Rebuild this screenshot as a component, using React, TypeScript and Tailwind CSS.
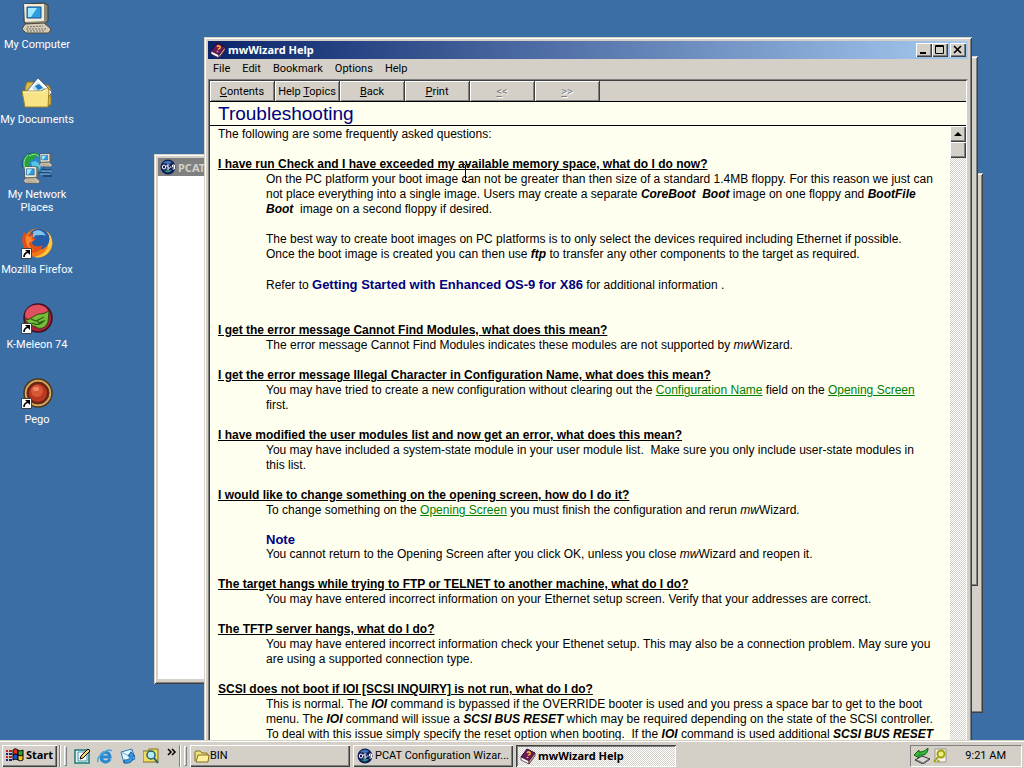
import type { ReactNode } from 'react';

const Book = () => (
    <svg viewBox="0 0 16 16" className="size-4 shrink-0" aria-hidden="true">
        <path d="M1 9 7 1l8 4-6 8z" fill="#6a1a5c" stroke="#240828" />
        <path d="M1 9v3l8 4v-3z" fill="#fff" stroke="#401030" strokeWidth=".7" />
        <path d="m9 13 6-8v3l-6 8z" fill="#d8a890" stroke="#401030" strokeWidth=".7" />
        <path d="M7 5c1-2 4-1 3 1L8 7.500" fill="none" stroke="#ffb428" strokeWidth="1.500" />
        <path d="m7 9 1 1" stroke="#ffb428" strokeWidth="1.500" />
    </svg>
);

const Os9 = () => (
    <svg viewBox="0 0 16 16" className="size-4 shrink-0" aria-hidden="true">
        <circle cx="8" cy="8" r="7.5" fill="#101c58" />
        <path d="M3 4c3-3 7-3 9 0L8 5z" fill="#3f76b8" />
        <path d="M4 12c3 2 6 2 8-1l-4 0z" fill="#2a9080" />
        <ellipse cx="4" cy="8" rx="1.7" ry="2" fill="none" stroke="#fff" />
        <path d="M9.500 6H7v2h2v2H6.500M10 8h1.500M14.500 8h-2V6h2v4h-2" fill="none" stroke="#fff" />
    </svg>
);

const Monitor = () => (
    <>
        <path d="m3 2 20-1 4 2v16l-4 3H6l-3-2z" fill="#8c8878" stroke="#403c34" />
        <path d="M3 2h20v17l-19 1z" fill="#f0ecdc" />
        <path d="M6 5h14v11H6z" fill="#2f9ce0" stroke="#18508c" />
        <path d="M7 6h9l-6 9H7z" fill="#a0e8ff" />
        <path d="m4 22 19-1 7 6-2 4H5l-4-4z" fill="#d4ccb8" stroke="#504838" />
        <path d="m6 25 16-1m-17 3h20m-19 2h18" stroke="#787060" strokeDasharray="2 1" />
    </>
);

const Computer = () => (
    <svg viewBox="0 0 32 32" className="size-8" aria-hidden="true">
        <Monitor />
    </svg>
);

const Documents = () => (
    <svg viewBox="0 0 32 32" className="size-8" aria-hidden="true">
        <path d="M4 10 6 5h6l2 3h13l3 4v16H5z" fill="#d8b848" stroke="#907020" />
        <path d="M6 14 17 1l14 14-8 12z" fill="#fff" stroke="#506c90" />
        <path d="m11 11 6-6 8 8-6 6z" fill="#b8ddf4" />
        <path d="m14 9 4-2 4 4-5 2z" fill="#2878bc" />
        <path d="M1 14h20l2-2h5l-1 18H4z" fill="#f8e484" stroke="#a08428" />
        <path d="M2 15h20l2-2h3" fill="none" stroke="#fff8c8" />
    </svg>
);

const Network = () => (
    <svg viewBox="0 0 32 32" className="size-8" aria-hidden="true">
        <circle cx="12" cy="12" r="11" fill="#2b86c8" stroke="#104c78" />
        <path d="M2 8c3-7 11-8 16-6l-5 5-4 2-1 5-4 2-2 3z" fill="#28a040" />
        <path d="m10 10 5-1 5 5-3 6-5-2z" fill="#58c4e8" />
        <path d="M7 3c-4 4-5 8-3 13M8 4c4-2 7-2 10 0" fill="none" stroke="#90e890" />
        <g transform="translate(18 1) scale(.44)"><Monitor /></g>
        <g transform="translate(2 14) scale(.56)"><Monitor /></g>
        <path d="M20 18h11M19 21h10M22 24h9" stroke="#183c6c" strokeWidth="1.500" />
        <path d="M20 19h11M19 22h10" stroke="#80b8e0" />
    </svg>
);

const Shortcut = () => (
    <>
        <path d="M.5 21.500h10v10H.5z" fill="#fff" stroke="#404040" />
        <path d="M3 30c0-3 1-4 4-5" fill="none" stroke="#000" strokeWidth="1.700" />
        <path d="M4 23h5v5z" fill="#000" />
    </>
);

const Firefox = () => (
    <svg viewBox="0 0 32 32" className="size-8" aria-hidden="true">
        <circle cx="17" cy="16" r="14.500" fill="#f07818" />
        <path d="M20 2c8 2 12 8 11 16-2 9-10 14-18 12 10-2 15-8 14-16-1-5-3-9-7-12z" fill="#fcc840" />
        <circle cx="18" cy="12" r="10.500" fill="#245ca8" />
        <path d="M12 5c5-4 11-1 13 4-4-2-7 0-10-1l-3 3z" fill="#80c4ec" />
        <path d="M3 5c1 2 3 3 5 3l5-2-2 4 4 2-4 3c0 4 5 6 11 3-3 8-11 10-17 5-4-4-5-12-2-18z" fill="#e05018" />
        <path d="m5 8 4 2 3-1-2 3 3 1-5 3c0 4 3 6 6 7-8 0-10-8-9-15z" fill="#f88830" />
        <Shortcut />
    </svg>
);

const KMeleon = () => (
    <svg viewBox="0 0 32 32" className="size-8" aria-hidden="true">
        <circle cx="17" cy="16" r="14" fill="#a8203c" stroke="#40101c" strokeWidth="1.500" />
        <path d="M4 14c0-8 7-12 15-11 4 1 7 3 8 6L7 17z" fill="#e05060" />
        <path d="M4 18c6 0 9-5 14-6 5 0 6-1 10-3l-1 11c-2 6-8 8-12 5-4-1-7-3-11-7z" fill="#78bc38" stroke="#284c10" />
        <path d="m10 17 5 2 8-4M11 21c5 3 10 1 13-3m-8 0 2 3 4-2" fill="none" stroke="#286018" strokeWidth="1.200" />
        <Shortcut />
    </svg>
);

const Pego = () => (
    <svg viewBox="0 0 32 32" className="size-8" aria-hidden="true">
        <circle cx="17" cy="16" r="14" fill="#d8a860" stroke="#50381c" strokeWidth="1.500" />
        <circle cx="17" cy="16" r="11" fill="#702014" stroke="#603018" />
        <circle cx="17" cy="16" r="9" fill="#b83820" />
        <circle cx="16" cy="14" r="6" fill="#d85838" />
        <ellipse cx="15" cy="12" rx="3" ry="2" fill="#f08868" />
        <Shortcut />
    </svg>
);

const desktopIcons = [
    { label: 'My Computer', icon: <Computer /> },
    { label: 'My Documents', icon: <Documents /> },
    { label: 'My Network Places', icon: <Network /> },
    { label: 'Mozilla Firefox', icon: <Firefox /> },
    { label: 'K-Meleon 74', icon: <KMeleon /> },
    { label: 'Pego', icon: <Pego /> },
];

const raised = 'bg-[#d4d0c8] shadow-[inset_1px_1px_#fff,inset_-1px_-1px_#404040,inset_-2px_-2px_#808080]';
const frame = 'bg-[#d4d0c8] shadow-[inset_1px_1px_#d4d0c8,inset_-1px_-1px_#404040,inset_2px_2px_#fff,inset_-2px_-2px_#808080]';
const dither = 'bg-[repeating-conic-gradient(#d4d0c8_0_25%,#ffffff_0_50%)] bg-[length:2px_2px]';
const boldUi = "font-['Noto_Sans',sans-serif] font-bold";

const CaptionButton = ({ label, children }: { label: string; children: ReactNode }) => (
    <button aria-label={label} className={`h-3.5 w-4 ${raised}`}>
        <svg viewBox="0 0 16 14" className="h-3.5 w-4" fill="none" stroke="#000" aria-hidden="true">
            {children}
        </svg>
    </button>
);

const Line = ({ children }: { children: ReactNode }) => (
    <span className="block whitespace-nowrap">{children}</span>
);

const Topic = ({ title, children }: { title: string; children: ReactNode }) => (
    <section className="mb-[15px]">
        <h2 className="font-bold whitespace-nowrap underline">{title}</h2>
        <div className="ml-12">{children}</div>
    </section>
);

const Jump = ({ children }: { children: ReactNode }) => (
    <a href="#" className="text-[#008000] underline">{children}</a>
);

const Cmd = ({ children }: { children: ReactNode }) => (
    <b className="italic">{children}</b>
);

const HelpText = () => (
    <div className="min-w-0 flex-1 overflow-hidden pt-px pl-2 text-[12px] leading-[15px] text-black">
        <p className="mb-[15px]">The following are some frequently asked questions:</p>
        <Topic title="I have run Check and I have exceeded my available memory space, what do I do now?">
            <p className="mb-[15px]">
                <Line>On the PC platform your boot image can not be greater than then size of a standard 1.4MB floppy. For this reason we just can</Line>
                <Line>not place everything into a single image. Users may create a separate <Cmd>CoreBoot&nbsp; Boot</Cmd> image on one floppy and <Cmd>BootFile</Cmd></Line>
                <Line><Cmd>Boot</Cmd>&nbsp; image on a second floppy if desired.</Line>
            </p>
            <p className="mb-[15px]">
                <Line>The best way to create boot images on PC platforms is to only select the devices required including Ethernet if possible.</Line>
                <Line>Once the boot image is created you can then use <Cmd>ftp</Cmd> to transfer any other components to the target as required.</Line>
            </p>
            <p className="mb-[30px] leading-4 whitespace-nowrap">
                Refer to <b className="text-[13px] text-[#000080]">Getting Started with Enhanced OS-9 for X86</b> for additional information .
            </p>
        </Topic>
        <Topic title="I get the error message Cannot Find Modules, what does this mean?">
            <Line>The error message Cannot Find Modules indicates these modules are not supported by <i>mw</i>Wizard.</Line>
        </Topic>
        <Topic title="I get the error message Illegal Character in Configuration Name, what does this mean?">
            <Line>You may have tried to create a new configuration without clearing out the <Jump>Configuration Name</Jump> field on the <Jump>Opening Screen</Jump></Line>
            <Line>first.</Line>
        </Topic>
        <Topic title="I have modified the user modules list and now get an error, what does this mean?">
            <Line>You may have included a system-state module in your user module list.&nbsp; Make sure you only include user-state modules in</Line>
            <Line>this list.</Line>
        </Topic>
        <Topic title="I would like to change something on the opening screen, how do I do it?">
            <Line>To change something on the <Jump>Opening Screen</Jump> you must finish the configuration and rerun <i>mw</i>Wizard.</Line>
            <h3 className="mt-[15px] text-[13px] leading-[14px] font-bold text-[#000080]">Note</h3>
            <Line>You cannot return to the Opening Screen after you click OK, unless you close <i>mw</i>Wizard and reopen it.</Line>
        </Topic>
        <Topic title="The target hangs while trying to FTP or TELNET to another machine, what do I do?">
            <Line>You may have entered incorrect information on your Ethernet setup screen. Verify that your addresses are correct.</Line>
        </Topic>
        <Topic title="The TFTP server hangs, what do I do?">
            <Line>You may have entered incorrect information check your Ethenet setup. This may also be a connection problem. May sure you</Line>
            <Line>are using a supported connection type.</Line>
        </Topic>
        <Topic title="SCSI does not boot if IOI [SCSI INQUIRY] is not run, what do I do?">
            <Line>This is normal. The <Cmd>IOI</Cmd> command is bypassed if the OVERRIDE booter is used and you press a space bar to get to the boot</Line>
            <Line>menu. The <Cmd>IOI</Cmd> command will issue a <Cmd>SCSI BUS RESET</Cmd> which may be required depending on the state of the SCSI controller.</Line>
            <Line>To deal with this issue simply specify the reset option when booting.&nbsp; If the <Cmd>IOI</Cmd> command is used additional <Cmd>SCSI BUS RESET</Cmd></Line>
        </Topic>
    </div>
);

const toolButtons = [
    { key: 'C', rest: 'ontents' },
    { before: 'Help ', key: 'T', rest: 'opics' },
    { key: 'B', rest: 'ack' },
    { key: 'P', rest: 'rint' },
    { key: '<', rest: '<', off: true },
    { key: '>', rest: '>', off: true },
];

const HelpWindow = () => (
    <div className={`absolute top-[37px] left-[204px] flex h-[740px] w-[768px] flex-col p-1 ${frame}`}>
        <div className="flex h-[18px] shrink-0 items-center bg-linear-to-r/srgb from-[#0a246a] to-[#a6caf0] px-0.5 text-white">
            <Book />
            <span className={`ml-0.5 flex-1 pb-0.5 ${boldUi}`}>mwWizard Help</span>
            <CaptionButton label="Minimize"><path d="M4 10h6" strokeWidth="2" /></CaptionButton>
            <CaptionButton label="Maximize"><path d="M3.500 2.500h8v8h-8zM3 3.500h9" /></CaptionButton>
            <span className="w-0.5" />
            <CaptionButton label="Close"><path d="m4 3 7 7m0-7-7 7" strokeWidth="1.700" /></CaptionButton>
        </div>
        <div className="flex h-5 shrink-0 items-center gap-3 px-[5px] pb-0.5">
            {['File', 'Edit', 'Bookmark', 'Options', 'Help'].map((name) => (
                <button key={name}>{name}</button>
            ))}
        </div>
        <div className="flex min-h-0 flex-1 flex-col border border-[#808080] border-r-[#d4d0c8]">
            <div className="flex min-h-0 flex-1 flex-col border-x border-t border-[#404040] border-r-white">
                <div className="flex h-[21px] shrink-0 border-b border-black">
                    {toolButtons.map((b) => (
                        <button
                            key={b.key}
                            disabled={b.off}
                            className="w-[65px] border-r border-[#404040] bg-[#d4d0c8] whitespace-nowrap shadow-[inset_1px_1px_#fff,inset_-1px_-1px_#808080] disabled:text-[#808080] disabled:text-shadow-[1px_1px_#fff]"
                        >
                            {b.before}<u>{b.key}</u>{b.rest}
                        </button>
                    ))}
                </div>
                <div className="flex min-h-0 flex-1 flex-col bg-[#fffff0] font-['Liberation_Sans',sans-serif]">
                    <h1 className="h-6 shrink-0 border-b border-black pl-2 text-[19px] leading-[23px] text-[#000080]">Troubleshooting</h1>
                    <div className="flex min-h-0 flex-1">
                        <HelpText />
                        <div className={`w-4 shrink-0 ${dither}`}>
                            <button aria-label="Scroll up" className={`block h-4 w-4 ${raised}`}>
                                <svg viewBox="0 0 16 16" className="size-4" aria-hidden="true"><path d="m4 10 4-4 4 4z" /></svg>
                            </button>
                            <div className={`h-4 w-4 ${raised}`} />
                        </div>
                    </div>
                </div>
            </div>
        </div>
    </div>
);

const Start = () => (
    <svg viewBox="0 0 18 16" className="h-4 w-[18px]" aria-hidden="true">
        <path d="M7 3c2-2 3-1 5 0v5C10 7 9 7 7 8z" fill="#e03020" stroke="#000" />
        <path d="M12 3c2 1 3 1 5 0v5c-2 1-3 1-5 0z" fill="#30a030" stroke="#000" />
        <path d="M7 8c2-1 3-1 5 0v5c-2-1-3-1-5 0z" fill="#2050d0" stroke="#000" />
        <path d="M12 8c2 1 3 1 5 0v5c-2 1-3 1-5 0z" fill="#f0c820" stroke="#000" />
        <path d="M0 4h2m1 0h3M0 10h2m1 0h3" stroke="#c02020" strokeWidth="2" />
        <path d="M0 7h2m1 0h3M0 13h2m1 0h3" stroke="#202080" strokeWidth="2" />
    </svg>
);

const quickLaunch = [
    {
        label: 'Show Desktop',
        art: (
            <>
                <path d="M1 2h14v13H1z" fill="#e8f4f4" stroke="#187878" strokeWidth="1.500" />
                <path d="M4 4h9v9H4z" fill="#fff" stroke="#4098a0" />
                <path d="m6 11 1-3 7-7 2 2-7 7z" fill="#f8d878" stroke="#000" />
            </>
        ),
    },
    {
        label: 'Internet Explorer',
        art: (
            <>
                <path d="M13 11c-3 5-9 3-9-2s8-7 9 0H5" fill="none" stroke="#2888d0" strokeWidth="3" />
                <path d="M1 14C-1 9 11-1 15 3" fill="none" stroke="#48a8e0" strokeWidth="1.500" />
            </>
        ),
    },
    {
        label: 'Outlook Express',
        art: (
            <>
                <path d="m1 4 11-3 3 10-11 4z" fill="#e8f8ff" stroke="#2878b8" />
                <path d="m1 4 8 4 3-7" fill="none" stroke="#60a8d8" />
                <path d="M4 15c7 1 10-3 9-7h2l-4-4-3 4h2c0 3-2 4-6 4z" fill="#3898e0" stroke="#1860a0" />
            </>
        ),
    },
    {
        label: 'Search',
        art: (
            <>
                <path d="M0 3h5l1-2h9v13H0z" fill="#f0dc60" stroke="#807020" />
                <circle cx="8" cy="7" r="4" fill="#b8ecf8" stroke="#206070" strokeWidth="1.500" />
                <path d="m11 10 4 5" stroke="#206070" strokeWidth="2" />
            </>
        ),
    },
];

const Folder = () => (
    <svg viewBox="0 0 16 16" className="size-4 shrink-0" aria-hidden="true">
        <path d="M1 13V4l1-1h4l2 2h5v3" fill="#f0e080" stroke="#807020" />
        <path d="M4 7h11l-1 7H2z" fill="#fff0a0" stroke="#807020" />
    </svg>
);

const Grip = () => (
    <>
        <span className="h-[22px] w-0.5 border-l border-[#808080] bg-white" />
        <span className="mx-[3px] h-5 w-[3px] border border-t-white border-r-[#808080] border-b-[#808080] border-l-white" />
    </>
);

const Taskbar = () => (
    <footer className="flex h-7 shrink-0 items-center border-t border-[#d4d0c8] bg-[#d4d0c8] px-0.5 pt-0.5 shadow-[inset_0_1px_#fff]">
        <button className={`flex h-[22px] w-[55px] items-center justify-center gap-0.5 pb-0.5 ${boldUi} ${raised}`}>
            <Start />Start
        </button>
        <span className="w-0.5" />
        <Grip />
        <div className="flex items-center gap-[7px] px-1">
            {quickLaunch.map((q) => (
                <button key={q.label} aria-label={q.label}>
                    <svg viewBox="0 0 16 16" className="block size-4" aria-hidden="true">{q.art}</svg>
                </button>
            ))}
        </div>
        <button aria-label="More" className="mb-2 w-4">
            <svg viewBox="0 0 16 8" className="h-2 w-4" fill="none" stroke="#000" strokeWidth="1.500" aria-hidden="true">
                <path d="m5 1 3 3-3 3m4-6 3 3-3 3" />
            </svg>
        </button>
        <Grip />
        <div className="flex min-w-0 flex-1 gap-[3px]">
            <button className={`flex h-[22px] w-40 items-center px-1 ${raised}`}><Folder />BIN</button>
            <button className={`flex h-[22px] w-40 items-center gap-0.5 px-1 whitespace-nowrap ${raised}`}><Os9 />PCAT Configuration Wizar...</button>
            <button className={`flex h-[22px] w-40 items-center gap-0.5 px-1 shadow-[inset_1px_1px_#404040,inset_-1px_-1px_#fff,inset_2px_2px_#808080] ${boldUi} ${dither}`}><Book />mwWizard Help</button>
        </div>
        <div className="flex h-[22px] w-28 items-center border border-t-[#808080] border-r-white border-b-white border-l-[#808080] px-[3px]">
            <svg viewBox="0 0 16 16" className="size-4" aria-hidden="true">
                <path d="m1 12 7-4 8 3-7 5z" fill="#d8d8d8" stroke="#303030" />
                <path d="m3 12 6 3 6-4" fill="none" stroke="#707070" />
                <path d="m0 7 5-5v2c4 0 6-1 9-4 0 6-4 8-9 7v3z" fill="#38b838" stroke="#106010" />
            </svg>
            <svg viewBox="0 0 16 16" className="ml-0.5 size-4" aria-hidden="true">
                <path d="M3 1h11v13H3z" fill="#f4f4e8" stroke="#989890" />
                <circle cx="9" cy="6" r="3.500" fill="#f0f080" stroke="#a0a010" strokeWidth="2" />
                <path d="m6 9-4 5m4-2 1 2" stroke="#a0a010" strokeWidth="2" />
            </svg>
            <span className="flex-1 pr-3 text-right">9:21 AM</span>
        </div>
    </footer>
);

export default function App() {
    return (
        <div className="flex h-screen flex-col overflow-hidden bg-[#3a6ea5] font-[Roboto,sans-serif] text-[11px] leading-[13px] text-black">
            <main className="relative min-h-0 flex-1 overflow-hidden">
                <div className="flex w-[74px] flex-col text-white">
                    {desktopIcons.map(({ label, icon }) => (
                        <button key={label} className="flex h-[75px] flex-col items-center gap-1 pt-0.5">
                            {icon}
                            <span>{label}</span>
                        </button>
                    ))}
                </div>
                <div className={`absolute top-[173px] left-[220px] h-[540px] w-[763px] ${frame}`} />
                <div className={`absolute top-[56px] left-[215px] h-[530px] w-[763px] ${frame}`} />
                <div className={`absolute top-[154px] left-[154px] h-[530px] w-[760px] p-1 ${frame}`}>
                    <div className={`flex h-[18px] items-center gap-0.5 bg-[#808080] px-0.5 text-[#d4d0c8] ${boldUi}`}>
                        <Os9 />PCAT
                    </div>
                    <div className="h-[503px] bg-white" />
                </div>
                <HelpWindow />
                <svg viewBox="0 0 9 18" className="absolute top-[164px] left-[461px] h-[18px] w-[9px]" fill="none" stroke="#000" aria-hidden="true">
                    <path d="M1 .5h3M5 .5h3M4.500 1v16M1 17.500h3M5 17.500h3" />
                </svg>
            </main>
            <Taskbar />
        </div>
    );
}
